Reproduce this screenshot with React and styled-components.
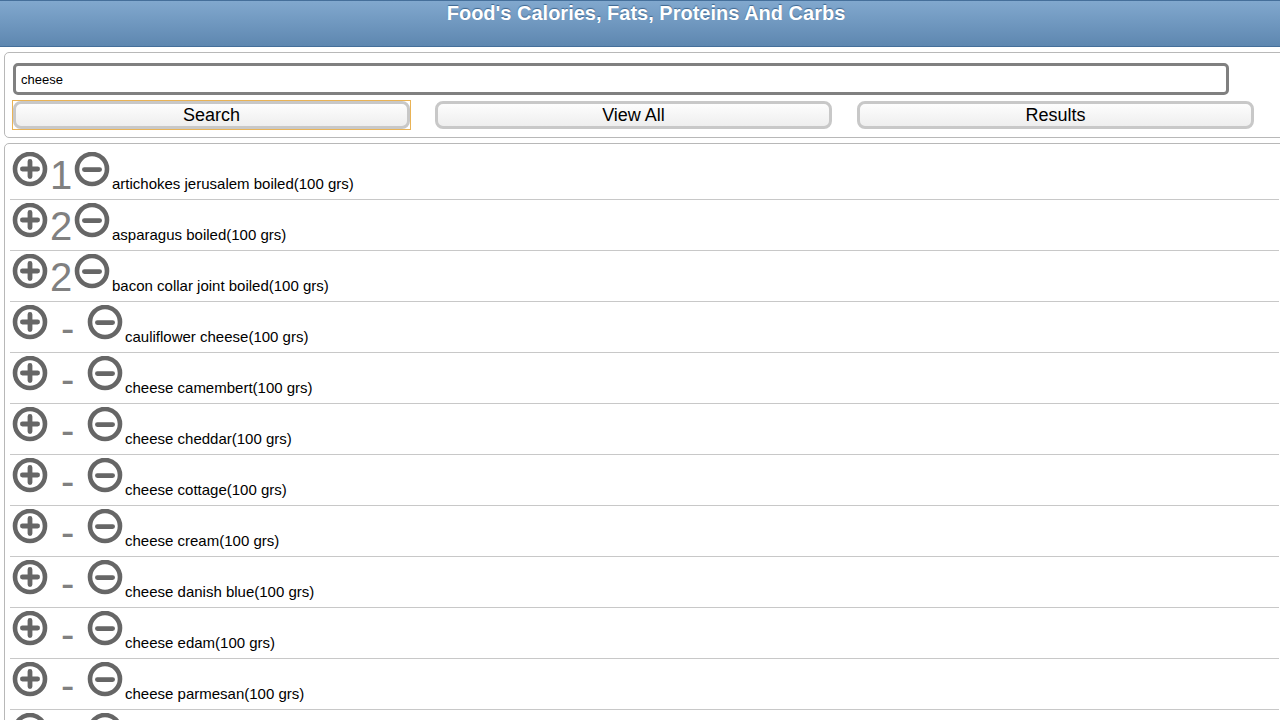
import React, { useState } from "react";
import styled, { createGlobalStyle } from "styled-components";

const GlobalStyle = createGlobalStyle`
  *, *::before, *::after { box-sizing: border-box; }
  html { scrollbar-width: none; overflow-x: hidden; }
  body {
    margin: 0;
    background: #fff;
    color: #000;
    font-family: "Liberation Sans", Arial, sans-serif;
  }
`;

const Page = styled.main`
  display: flex;
  flex-direction: column;
  gap: 5px;
  margin-right: -12px;
`;

const Header = styled.header`
  height: 47px;
  border-top: 1px solid #456f9a;
  border-bottom: 1px solid #456f9a;
  background: linear-gradient(#81a8ce, #5e87b0);
`;

const Title = styled.h1`
  margin: 0;
  font-size: 20px;
  line-height: 24px;
  font-weight: bold;
  text-align: center;
  color: #fff;
  text-shadow: 0 -1px 1px #3e6790;
`;

const Panel = styled.section`
  margin: 0 7px 0 4px;
  padding: 5px;
  border: 1px solid #b8b8b8;
  border-radius: 5px;
`;

const SearchForm = styled.form`
  display: flex;
  flex-direction: column;
  gap: 6px;
  padding: 5px 25px 3px 3px;
`;

const SearchInput = styled.input`
  height: 32px;
  margin-right: 25px;
  padding: 0 5px;
  border: 3px solid #808080;
  border-radius: 5px;
  outline: none;
  background: #fff;
  color: #000;
  font: 13px "Liberation Sans", Arial, sans-serif;
`;

const Actions = styled.div`
  display: grid;
  grid-template-columns: repeat(3, 1fr);
  gap: 25px;
`;

const ActionCell = styled.div`
  display: flex;
  outline: ${(p) => (p.$active ? "1px solid #e9b356" : "none")};
`;

const ActionButton = styled.button`
  flex: 1;
  height: 28px;
  padding: 0;
  border: 3px solid #c8c8c8;
  border-radius: 8px;
  outline: none;
  background: linear-gradient(#fdfdfd, #eee);
  color: #000;
  font: 18px/22px "Liberation Sans", Arial, sans-serif;
`;

const FoodList = styled.ul`
  margin: 0;
  padding: 0;
  list-style: none;
`;

const FoodRow = styled.li`
  display: flex;
  height: 51px;
  padding: 3px 2px 0;
  border-bottom: 1px solid #c8c8c8;
`;

const RoundButton = styled.button`
  display: block;
  width: 36px;
  height: 36px;
  padding: 0;
  border: 0;
  background: none;
  color: #666;

  svg { display: block; }
`;

const Amount = styled.span`
  width: ${(p) => (p.$empty ? 35 : 22)}px;
  margin: 0 2px;
  font-size: 40px;
  line-height: 46px;
  color: #808080;
  white-space: pre;
`;

const FoodName = styled.span`
  margin-left: 2px;
  font-size: 15px;
  line-height: 64px;
  height: 46px;
  white-space: nowrap;
`;

function CircleIcon({ plus }) {
  return (
    <svg width="36" height="36" viewBox="0 0 36 36" fill="none" stroke="currentColor" aria-hidden="true">
      <circle cx="18" cy="17" r="15" strokeWidth="4.6" />
      <path d={plus ? "M10.4 17H25.6M18 9.4V24.6" : "M10.4 17.6H25.6"} strokeWidth="4.8" strokeLinecap="round" />
    </svg>
  );
}

const initialFoods = [
  ["artichokes jerusalem boiled", 1],
  ["asparagus boiled", 2],
  ["bacon collar joint boiled", 2],
  ["cauliflower cheese", 0],
  ["cheese camembert", 0],
  ["cheese cheddar", 0],
  ["cheese cottage", 0],
  ["cheese cream", 0],
  ["cheese danish blue", 0],
  ["cheese edam", 0],
  ["cheese parmesan", 0],
  ["cheese spread", 0],
];

const actions = ["Search", "View All", "Results"];

export default function App() {
  const [foods, setFoods] = useState(initialFoods);
  const [active, setActive] = useState("Search");

  const change = (index, step) =>
    setFoods(foods.map(([name, n], i) => [name, i === index ? Math.max(0, n + step) : n]));

  return (
    <>
      <GlobalStyle />
      <Page>
        <Header>
          <Title>Food's Calories, Fats, Proteins And Carbs</Title>
        </Header>
        <Panel>
          <SearchForm onSubmit={(e) => e.preventDefault()}>
            <SearchInput type="text" aria-label="Food name" defaultValue="cheese" />
            <Actions>
              {actions.map((label) => (
                <ActionCell key={label} $active={label === active}>
                  <ActionButton type="button" onClick={() => setActive(label)}>{label}</ActionButton>
                </ActionCell>
              ))}
            </Actions>
          </SearchForm>
        </Panel>
        <Panel>
          <FoodList>
            {foods.map(([name, n], i) => (
              <FoodRow key={name}>
                <RoundButton type="button" aria-label={`Add ${name}`} onClick={() => change(i, 1)}>
                  <CircleIcon plus />
                </RoundButton>
                <Amount $empty={!n}>{n || " - "}</Amount>
                <RoundButton type="button" aria-label={`Remove ${name}`} onClick={() => change(i, -1)}>
                  <CircleIcon />
                </RoundButton>
                <FoodName>{name}(100 grs)</FoodName>
              </FoodRow>
            ))}
          </FoodList>
        </Panel>
      </Page>
    </>
  );
}
